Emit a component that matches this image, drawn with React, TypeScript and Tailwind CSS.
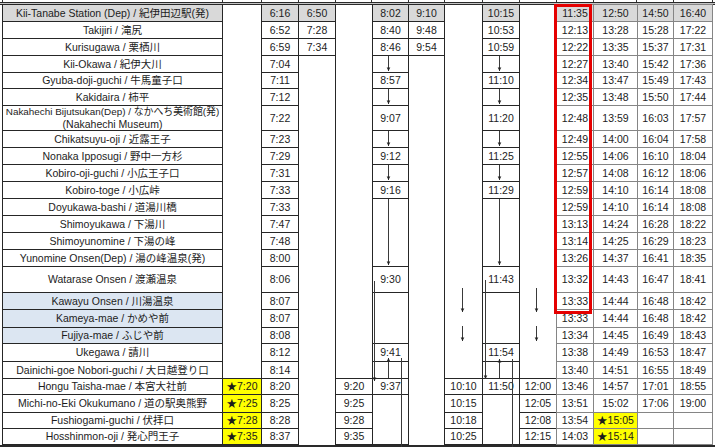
import React from "react";

type D = {
  t?: string;
  k: "f" | "r" | "n";
  bg?: string;
  span?: number;
  light?: boolean;
  st?: boolean;
  two?: boolean;
};

const GRAY = "bg-[#d9d9d9]";
const BLUE = "bg-[#dce6f2]";
const YEL = "bg-[#ffff00]";

const st = (t: string, bg?: string): D => ({ t, k: "f", bg, st: true });
const tm = (t: string, bg?: string, span?: number): D => ({ t, k: "f", bg, span });
const lt = (t: string, bg?: string): D => ({ t, k: "f", bg, light: true });
const none = (span: number): D => ({ k: "n", span });
const ronly = (span: number): D => ({ k: "r", span });
const jm = (a: string, b: string, c: string, d: string): D[] => [lt(a), lt(b), lt(c), lt(d)];

const rows: D[][] = [
  [
    st("Kii-Tanabe Station (Dep) / 紀伊田辺駅(発)", GRAY),
    none(21),
    tm("6:16", GRAY),
    tm("6:50", GRAY),
    none(21),
    tm("8:02", GRAY),
    tm("9:10", GRAY),
    none(21),
    tm("10:15", GRAY),
    none(21),
    lt("11:35", GRAY),
    lt("12:50", GRAY),
    lt("14:50", GRAY),
    lt("16:40", GRAY),
  ],
  [st("Takijiri / 滝尻"), tm("6:52"), tm("7:28"), tm("8:40"), tm("9:48"), tm("10:53"), ...jm("12:13", "13:28", "15:28", "17:22")],
  [st("Kurisugawa / 栗栖川"), tm("6:59"), tm("7:34"), tm("8:46"), tm("9:54"), tm("10:59"), ...jm("12:22", "13:35", "15:37", "17:31")],
  [st("Kii-Okawa / 紀伊大川"), tm("7:04"), ronly(22), tm(""), ronly(22), tm(""), ...jm("12:27", "13:40", "15:42", "17:36")],
  [st("Gyuba-doji-guchi / 牛馬童子口"), tm("7:11"), tm("8:57"), tm("11:10"), ...jm("12:34", "13:47", "15:49", "17:43")],
  [st("Kakidaira / 柿平"), tm("7:12"), tm(""), tm(""), ...jm("12:35", "13:48", "15:50", "17:44")],
  [{ k: "f", st: true, two: true }, tm("7:22"), tm("9:07"), tm("11:20"), ...jm("12:48", "13:59", "16:03", "17:57")],
  [st("Chikatsuyu-oji / 近露王子"), tm("7:23"), tm(""), tm(""), ...jm("12:49", "14:00", "16:04", "17:58")],
  [st("Nonaka Ipposugi / 野中一方杉"), tm("7:29"), tm("9:12"), tm("11:25"), ...jm("12:55", "14:06", "16:10", "18:04")],
  [st("Kobiro-oji-guchi / 小広王子口"), tm("7:31"), tm(""), tm(""), ...jm("12:57", "14:08", "16:12", "18:06")],
  [st("Kobiro-toge / 小広峠"), tm("7:33"), tm("9:16"), tm("11:29"), ...jm("12:59", "14:10", "16:14", "18:08")],
  [st("Doyukawa-bashi / 道湯川橋"), tm("7:33"), tm("", undefined, 4), tm("", undefined, 4), ...jm("12:59", "14:10", "16:14", "18:08")],
  [st("Shimoyukawa / 下湯川"), tm("7:47"), ...jm("13:13", "14:24", "16:28", "18:22")],
  [st("Shimoyunomine / 下湯の峰"), tm("7:48"), ...jm("13:14", "14:25", "16:29", "18:23")],
  [st("Yunomine Onsen(Dep) / 湯の峰温泉(発)"), tm("8:00"), ...jm("13:26", "14:37", "16:41", "18:35")],
  [st("Watarase Onsen / 渡瀬温泉"), tm("8:06"), tm("9:30"), tm("11:43"), ...jm("13:32", "14:43", "16:47", "18:41")],
  [st("Kawayu Onsen / 川湯温泉", BLUE), tm("8:07"), tm("", undefined, 3), tm("", undefined, 3), ...jm("13:33", "14:44", "16:48", "18:42")],
  [st("Kameya-mae / かめや前", BLUE), tm("8:07"), ...jm("13:33", "14:44", "16:48", "18:42")],
  [st("Fujiya-mae / ふじや前", BLUE), tm("8:08"), ...jm("13:34", "14:45", "16:49", "18:43")],
  [st("Ukegawa / 請川"), tm("8:12"), tm("9:41"), tm("11:54"), ...jm("13:38", "14:49", "16:53", "18:47")],
  [st("Dainichi-goe Nobori-guchi / 大日越登り口"), tm("8:14"), tm(""), tm(""), ...jm("13:40", "14:51", "16:55", "18:49")],
  [
    st("Hongu Taisha-mae / 本宮大社前"),
    tm("★7:20", YEL),
    tm("8:20"),
    tm("9:20"),
    tm("9:37"),
    tm("10:10"),
    tm("11:50"),
    tm("12:00"),
    ...jm("13:46", "14:57", "17:01", "18:55"),
  ],
  [
    st("Michi-no-Eki Okukumano / 道の駅奥熊野"),
    tm("★7:25", YEL),
    tm("8:25"),
    tm("9:25"),
    tm("", undefined, 3),
    tm("10:15"),
    tm("", undefined, 3),
    tm("12:05"),
    ...jm("13:51", "15:02", "17:06", "19:00"),
  ],
  [
    st("Fushiogami-guchi / 伏拝口"),
    tm("★7:28", YEL),
    tm("8:28"),
    tm("9:28"),
    tm("10:18"),
    tm("12:08"),
    lt("13:54"),
    lt("★15:05", YEL),
    lt(""),
    lt(""),
  ],
  [
    st("Hosshinmon-oji / 発心門王子"),
    tm("★7:35", YEL),
    tm("8:37"),
    tm("9:35"),
    tm("10:25"),
    tm("12:15"),
    lt("14:03"),
    lt("★15:14", YEL),
    lt(""),
    lt(""),
  ],
];

const SPAN: Record<number, string> = {
  1: "",
  3: "row-span-3",
  4: "row-span-4",
  21: "row-span-21",
  22: "row-span-22",
};

function Cell({ d }: { d: D }) {
  const span = SPAN[d.span ?? 1];
  if (d.k === "n") return <div className={span} />;
  if (d.k === "r") return <div className={`${span} -ml-px -mt-px border-r border-[#262626]`} />;
  const border = d.light ? "border-[#858585]" : "border-[#262626]";
  if (d.two) {
    return (
      <div className={`-ml-px -mt-px flex flex-col items-center justify-center border ${border} whitespace-nowrap leading-[13px]`}>
        <span className="text-[9.9px]">Nakahechi Bijutsukan(Dep) / なかへち美術館(発)</span>
        <span className="text-[10.5px]">(Nakahechi Museum)</span>
      </div>
    );
  }
  return (
    <div
      className={`${span} -ml-px -mt-px flex items-center justify-center border ${border} ${d.bg ?? ""} whitespace-nowrap text-[10.5px] leading-none`}
    >
      {d.t}
    </div>
  );
}

type A = [number, number, number, "b" | "t" | null];
const arrows: A[] = [
  [388.5, 56, 71, "b"],
  [388.5, 89, 104, "b"],
  [388.5, 131, 146, "b"],
  [388.5, 165, 180, "b"],
  [388.5, 199, 265, "b"],
  [499.5, 56, 71, "b"],
  [499.5, 89, 104, "b"],
  [499.5, 131, 146, "b"],
  [499.5, 165, 180, "b"],
  [499.5, 199, 265, "b"],
  [374.5, 281, 381, "b"],
  [388.5, 358, 378, "t"],
  [401.5, 358, 447, null],
  [485.5, 280, 379, "b"],
  [499.5, 359, 378, "t"],
  [512.5, 359, 447, null],
  [462.5, 288, 312, "b"],
  [462.5, 326, 341, "b"],
  [536.5, 288, 312, "b"],
  [536.5, 326, 341, "b"],
];

const ticks = [2.5, 222.5, 261.5, 298.5, 335.5, 371.5, 408.5, 444.5, 482.5, 519.5, 556.5, 593.5, 636.5, 673.5, 712.5];

export default function App() {
  return (
    <div className="relative h-[447px] w-[715px] overflow-hidden bg-white font-['Liberation_Sans','Noto_Sans_CJK_JP',sans-serif] text-[#1c1c1c]">
      <div className="h-[2px]" />
      <div className="h-px bg-[#2a2a2a]" />
      <div className="h-px bg-[#c4c4c4]" />
      <div className="h-px bg-[#2a2a2a]" />
      <div className="grid grid-cols-[220px_39px_37px_37px_37px_36px_36px_38px_37px_37px_37px_44px_36px_39px] grid-rows-[17px_17px_17px_17px_16px_17px_25px_17px_17px_17px_17px_17px_17px_17px_17px_26px_17px_18px_16px_18px_17px_16px_18px_16px_16px] pl-[3px]">
        {rows.flat().map((d, i) => (
          <Cell key={i} d={d} />
        ))}
      </div>
      <div className="h-px bg-[#2a2a2a]" />
      <div className="h-px bg-[#2a2a2a]" />

      <svg className="pointer-events-none absolute left-0 top-0" width={715} height={447} viewBox="0 0 715 447">
        {ticks.map((x) => (
          <line key={x} x1={x} x2={x} y1={0} y2={2} stroke="#333" strokeWidth={1} />
        ))}
        {arrows.map(([x, y1, y2, h], i) => (
          <g key={i}>
            <line x1={x} x2={x} y1={y1} y2={y2} stroke="#3a3a3a" strokeWidth={1} />
            {h === "b" && <polygon points={`${x - 1.8},${y2 - 3.5} ${x + 1.8},${y2 - 3.5} ${x},${y2}`} fill="#222" />}
            {h === "t" && <polygon points={`${x - 1.8},${y1 + 3.5} ${x + 1.8},${y1 + 3.5} ${x},${y1}`} fill="#222" />}
          </g>
        ))}
      </svg>

      <div className="pointer-events-none absolute left-[554px] top-[4px] h-[310px] w-[38px] border-[3px] border-[#e50000]" />
    </div>
  );
}
